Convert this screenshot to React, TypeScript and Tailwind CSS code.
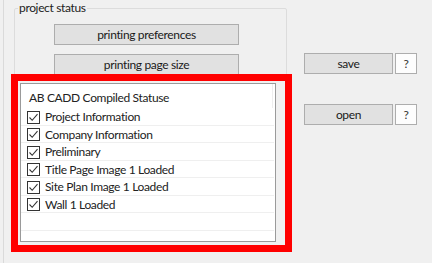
const items = [
  "Project Information",
  "Company Information",
  "Preliminary",
  "Title Page Image 1 Loaded",
  "Site Plan Image 1 Loaded",
  "Wall 1 Loaded",
];

function Check() {
  return (
    <span className="w-[13px] h-[13px] border border-[#333] bg-white flex items-center justify-center shrink-0">
      <svg width="11" height="11" viewBox="0 0 11 11">
        <path d="M1.5 5.5 L4.2 8.3 L9.5 2.2" fill="none" stroke="#333" strokeWidth="1.1" />
      </svg>
    </span>
  );
}

function WinButton({ label, className }: { label: string; className: string }) {
  return (
    <div
      className={`h-[21px] bg-[#e1e1e1] border border-[#adadad] flex items-center justify-center text-[#1a1a1a] ${className}`}
    >
      {label}
    </div>
  );
}

function Help() {
  return (
    <div className="w-[22px] h-[21px] bg-[#fdfdfd] border border-[#adadad] flex items-center justify-center text-[#333]">
      ?
    </div>
  );
}

export default function App() {
  return (
    <div className="w-[432px] h-[263px] bg-[#f0f0f0] relative overflow-hidden font-['Segoe_UI','Lato',sans-serif] text-[12px] tracking-[-0.35px] leading-[16px] text-[#1a1a1a]">
      <div className="ml-[3px] border-l border-[#dadada] h-full flex">
        <fieldset className="ml-[10px] w-[273px] h-[248px] border border-[#dcdcdc] rounded-[2px]">
          <legend className="ml-[3px] px-[1px] text-[#222]">project status</legend>
          <div className="flex flex-col pt-[8px]">
            <WinButton label="printing preferences" className="ml-[39px] w-[185px]" />
            <WinButton label="printing page size" className="ml-[39px] w-[185px] mt-[9px]" />
            <div className="ml-[5px] mt-[8px] w-[256px] h-[159px] border border-[#9a9a9a] bg-white flex flex-col">
              <div className="h-[24px] pl-[8px] pt-[6px] text-[#222] border-r border-[#eeeeee] mr-[2px]">
                AB CADD Compiled Statuse
              </div>
              {items.map((t) => (
                <div
                  key={t}
                  className="h-[17.5px] flex items-center gap-[5px] pl-[6px] pt-[2px] border-b border-[#efefef] mr-[1px] text-[#222]"
                >
                  <Check />
                  <span>{t}</span>
                </div>
              ))}
              <div className="h-[17.5px] border-b border-[#efefef] mr-[1px]" />
            </div>
          </div>
        </fieldset>
        <div className="ml-[17px] pt-[53px] flex flex-col gap-[30px]">
          <div className="flex gap-[2px]">
            <WinButton label="save" className="w-[89px]" />
            <Help />
          </div>
          <div className="flex gap-[2px]">
            <WinButton label="open" className="w-[89px]" />
            <Help />
          </div>
        </div>
      </div>
      <div className="absolute left-[11px] top-[74px] w-[281px] h-[178px] border-[7px] border-[#ff0000]" />
    </div>
  );
}
